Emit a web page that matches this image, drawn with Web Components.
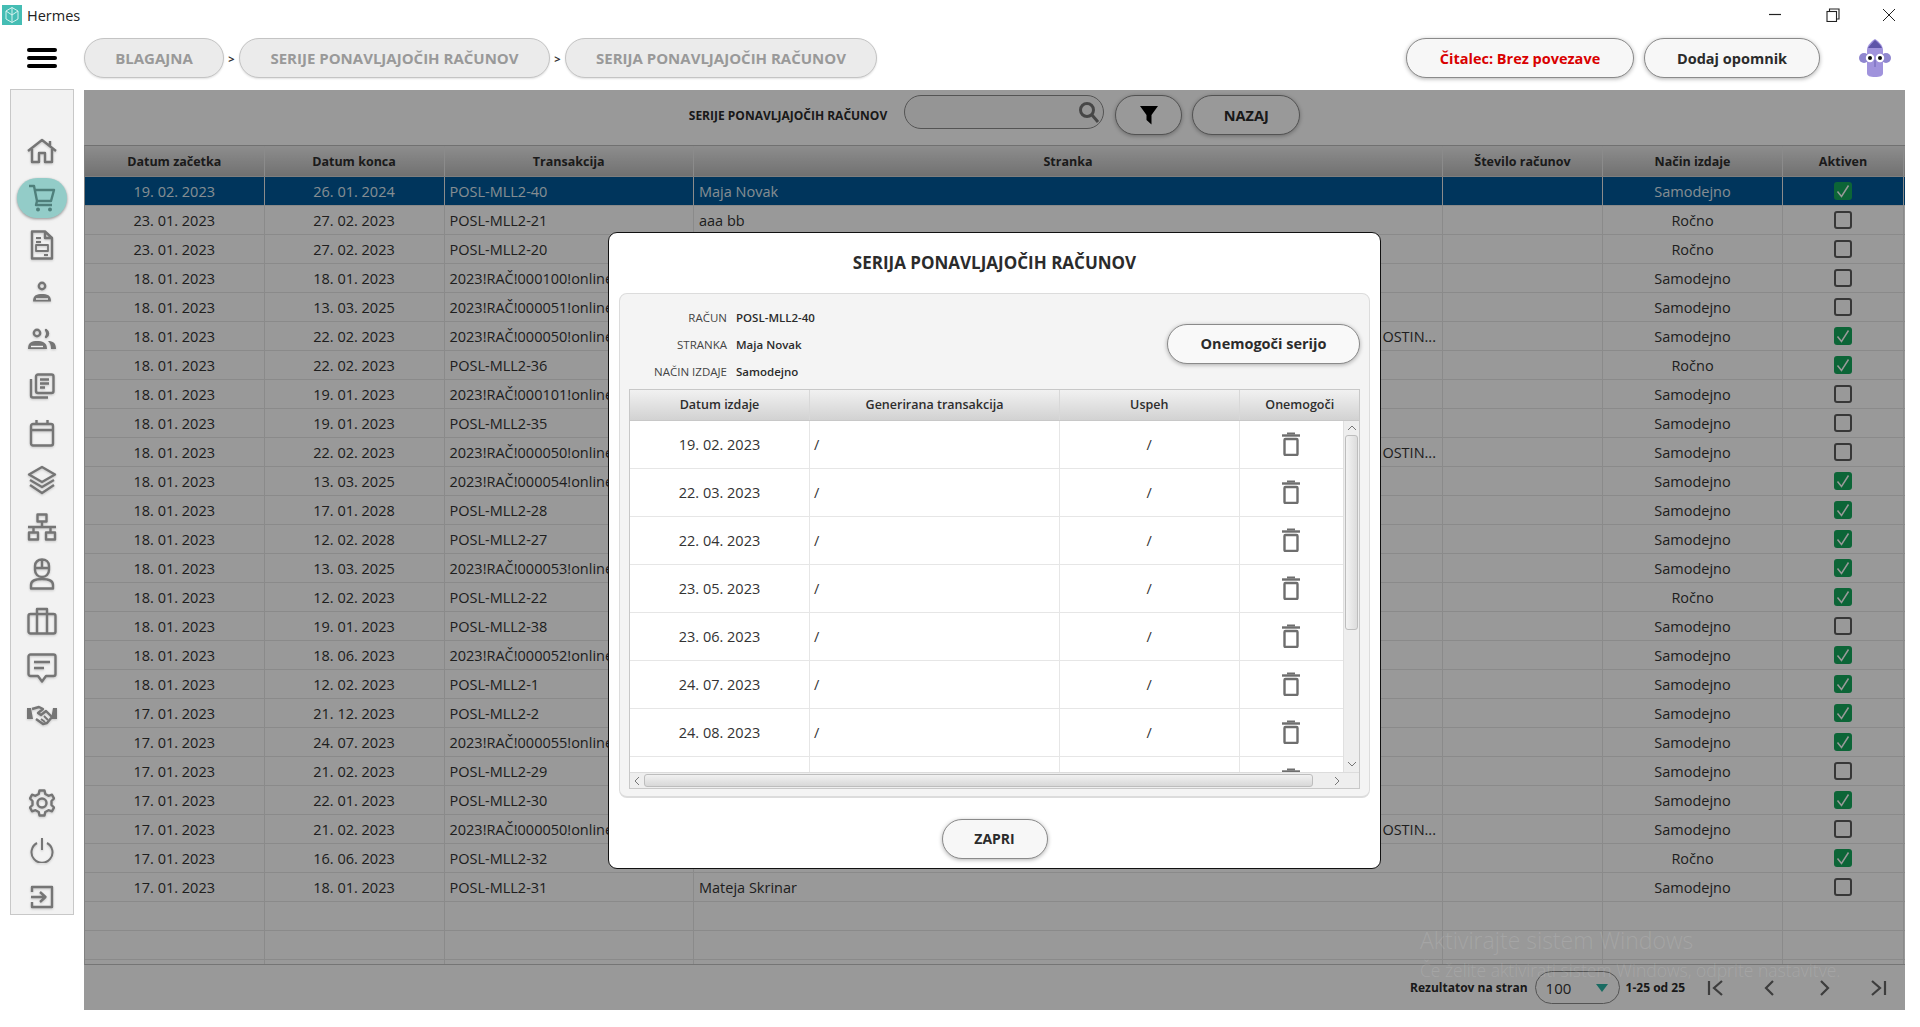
<!DOCTYPE html>
<html lang="sl"><head><meta charset="utf-8"><title>Hermes</title>
<style>
html,body{margin:0;padding:0;height:1027px;overflow:hidden;background:#fff;font-family:"Open Sans",sans-serif;color:#333}
</style></head><body>
<hermes-app></hermes-app>
<script>
const FONT='"Open Sans","Liberation Sans",sans-serif';
function def(name,html,setup){
  customElements.define(name,class extends HTMLElement{
    constructor(){super();const r=this.attachShadow({mode:'open'});r.innerHTML=typeof html==='function'?html(this):html;if(setup)setup(r,this);}
  });
}
const S=(w,h,vb,body,extra='')=>`<svg width="${w}" height="${h}" viewBox="${vb}" fill="none" stroke="currentColor" stroke-width="2.4" stroke-linejoin="round" ${extra}>${body}</svg>`;

def('title-bar',`<style>
:host{display:flex;align-items:center;height:30px;font:14.5px "Open Sans",sans-serif;color:#222}
.logo{width:20px;height:20px;margin:0 5px 0 2px;display:block}
.t{flex:1}
.w{display:flex;color:#222}
.w span{width:58px;height:30px;display:flex;align-items:center;justify-content:center}
</style>
<svg class="logo" viewBox="0 0 20 20"><rect width="20" height="20" fill="#45bdb4"/><path d="M10 2.5L16 6V14L10 17.5L4 14V6ZM10 2.5V17.5M4 6L10 10L16 6" fill="none" stroke="#d6f2ef" stroke-width="1"/></svg>
<span class="t">Hermes</span>
<div class="w">
<span style="margin-right:0"><svg width="14" height="14" viewBox="0 0 14 14"><path d="M1 6.5H13" stroke="#222" stroke-width="1.2"/></svg></span>
<span><svg width="14" height="14" viewBox="0 0 14 14" fill="none" stroke="#222" stroke-width="1.1"><rect x="1" y="3.5" width="9.5" height="10"/><path d="M3.5 3.5V1H13V11H10.5"/></svg></span>
<span style="width:54px;margin-right:4px"><svg width="14" height="14" viewBox="0 0 14 14"><path d="M1 1L13 13M13 1L1 13" stroke="#222" stroke-width="1"/></svg></span>
</div>`);

def('pill-button',`<style>
:host{display:inline-flex;box-sizing:border-box;align-items:center;justify-content:center;height:40px;border-radius:20px;border:1.5px solid #8a8a8a;background:#f7f7f7;font:700 14.5px "Open Sans",sans-serif;color:#2b2b2b;box-shadow:0 1px 4px rgba(0,0,0,.3);white-space:nowrap}
:host([crumb]){background:#ebebeb;border-color:#c4c4c4;color:#999;font-size:15px;box-shadow:0 1px 2px rgba(0,0,0,.12)}
:host([danger]){color:#d90000}
</style><slot></slot>`);

const crumbSep=`<span style="width:15px;text-align:center;font:700 11px 'Open Sans',sans-serif;color:#333">&gt;</span>`;
def('top-bar',`<style>
:host{display:flex;align-items:flex-start;height:60px;box-sizing:border-box;padding-top:8px}
.burger{width:84px;height:40px;display:flex;align-items:center;padding-left:27px;box-sizing:border-box}
.crumbs{display:flex;align-items:center}
.right{margin-left:auto;display:flex;align-items:center;gap:10px}
.masc{margin:0 29px 0 29px;display:block}
</style>
<div class="burger"><svg width="30" height="20" viewBox="0 0 30 20"><g fill="#000"><rect y="0" width="30" height="4" rx="2"/><rect y="8" width="30" height="4" rx="2"/><rect y="16" width="30" height="4" rx="2"/></g></svg></div>
<div class="crumbs">
<pill-button crumb style="width:140px">BLAGAJNA</pill-button>${crumbSep}
<pill-button crumb style="width:311px">SERIJE PONAVLJAJOČIH RAČUNOV</pill-button>${crumbSep}
<pill-button crumb style="width:312px">SERIJA PONAVLJAJOČIH RAČUNOV</pill-button>
</div>
<div class="right">
<pill-button danger style="width:228px">Čitalec: Brez povezave</pill-button>
<pill-button style="width:176px">Dodaj opomnik</pill-button>
<svg class="masc" width="32" height="38" viewBox="0 0 32 38"><ellipse cx="5" cy="19" rx="5" ry="5" fill="#8f86cf"/><ellipse cx="27" cy="19" rx="5" ry="5" fill="#8f86cf"/><path d="M8 11C8 6 13 2 16 0C19 2 24 6 24 11V34C24 37 21 38 16 38C11 38 8 37 8 34Z" fill="#a093dc"/><path d="M9 9C12 5 14 3 16 1C18 3 21 5 23 9Z" fill="#5e54a8"/><circle cx="11" cy="19" r="4.2" fill="#fff"/><circle cx="21" cy="19" r="4.2" fill="#fff"/><circle cx="11" cy="19" r="2" fill="#111"/><circle cx="21" cy="19" r="2" fill="#111"/><path d="M16 21V28" stroke="#6d63b3" stroke-width="1"/></svg>
</div>`);

const icons={
home:S(32,26,'0 0 32 26','<path d="M2 13L16 2L30 13M24 8V3M6 11V24H13V15H19V24H26V11"/>'),
cart:S(30,30,'0 0 30 30','<path d="M2 3H7L10 18H24L27 7H8M10 18L9 22H25"/><circle cx="11" cy="26.5" r="2" fill="currentColor" stroke="none"/><circle cx="23" cy="26.5" r="2" fill="currentColor" stroke="none"/>','style="color:#4f7f7b"'),
doc:S(24,30,'0 0 24 30','<path d="M2 1.5H15L22 8V28.5H2ZM15 1.5V8H22"/><path d="M6 8H11M6 12H11M14 25H18" stroke-width="1.8"/><rect x="6" y="15" width="12" height="6" stroke-width="1.8"/>'),
person:S(20,22,'0 0 20 22','<circle cx="10" cy="5" r="3.2"/><path d="M1 20.5C1 14 5 13 10 13S19 14 19 20.5Z" fill="currentColor" stroke="none"/><path d="M4 18H16" stroke="#f2f2f2" stroke-width="1.4"/>'),
people:S(30,22,'0 0 30 22','<circle cx="10" cy="5" r="3.2"/><path d="M19 2A4 4 0 0 1 19 9A6 6 0 0 0 19 2Z" fill="currentColor"/><path d="M1 21C1 14 5 13 10 13S20 14 20 21Z" fill="currentColor" stroke="none"/><path d="M4 18.5H16" stroke="#f2f2f2" stroke-width="1.4"/><path d="M21 13C26 13 29 15 29 21H24C24 17 23 15 21 13Z" fill="currentColor" stroke="none"/>'),
copies:S(26,26,'0 0 26 26','<rect x="7" y="1.5" width="17.5" height="18.5" rx="2"/><path d="M2 6V22.5A2 2 0 0 0 4 24.5H19M11 6.5H20M11 10.5H20M11 14.5H16" /> '),
calendar:S(26,28,'0 0 26 28','<rect x="2" y="5" width="22" height="21.5" rx="2"/><path d="M2 11H24M7.5 1V5M18.5 1V5"/>'),
layers:S(30,30,'0 0 30 30','<path d="M15 2L28 9.5L15 17L2 9.5Z"/><path d="M3 15L15 22L27 15" /><path d="M3 20L15 28L27 20"/>'),
network:S(30,28,'0 0 30 28','<rect x="10.5" y="1.5" width="9" height="7"/><rect x="2" y="19.5" width="9" height="7"/><rect x="19" y="19.5" width="9" height="7"/><path d="M15 8.5V14M1 14H29M6.5 14V19.5M23.5 14V19.5"/>'),
worker:S(26,32,'0 0 26 32','<path d="M6 12V8C6 4 9 1.5 13 1.5S20 4 20 8V12C20 16 17 19 13 19S6 16 6 12ZM6 10H20M13 1.5V10"/><path d="M2 30.5V27C2 23 6 21 13 21S24 23 24 27V30.5Z"/>'),
briefcase:S(30,28,'0 0 30 28','<rect x="1.5" y="7" width="27" height="19.5" rx="2"/><path d="M10 7V2H20V7M10 7V26.5M20 7V26.5"/>'),
chat:S(30,30,'0 0 30 30','<path d="M3.5 1.5H26.5A2 2 0 0 1 28.5 3.5V21A2 2 0 0 1 26.5 23H19L15 28.5L11 23H3.5A2 2 0 0 1 1.5 21V3.5A2 2 0 0 1 3.5 1.5Z"/><path d="M7 9H23M7 15H17"/>'),
handshake:S(32,22,'0 0 32 22','<path d="M1 4H5L7 15H1ZM31 4H27L25 15H31Z" fill="currentColor" stroke="none"/><path d="M6 5L13 3L17 5L12 9L15 11L20 7L26 13L21 19L17 20L10 15"/><path d="M15 15L19 18M18 12L22 16" stroke-width="1.8"/>'),
gear:S(26,28,'0 0 26 28','<path d="M10.5 1.5H15.5L16.3 5L19.5 6.8L23 5.7L25 9.5L22.5 12V16L25 18.5L23 22.3L19.5 21.2L16.3 23L15.5 26.5H10.5L9.7 23L6.5 21.2L3 22.3L1 18.5L3.5 16V12L1 9.5L3 5.7L6.5 6.8L9.7 5Z"/><circle cx="13" cy="14" r="4.5"/>'),
power:S(24,26,'0 0 24 26','<path d="M7 6A10.5 10.5 0 1 0 17 6M12 1V13" stroke-width="2"/>'),
exit:S(24,24,'0 0 24 24','<path d="M2 7V2H22V22H2V17M1 12H15M10 7L15.5 12L10 17"/>')
};
def('side-nav',`<style>
:host{display:block;width:64px;height:826px;box-sizing:border-box;background:#f2f2f2;border:1px solid #c8c8c8;padding-top:37px;color:#757575;flex:none}
.i{height:47px;display:flex;align-items:center;justify-content:center;filter:drop-shadow(0 1px 1px rgba(0,0,0,.18))}
.act{width:50px;height:40px;border-radius:20px;background:#93ccc8;display:flex;align-items:center;justify-content:center;box-shadow:0 1px 3px rgba(0,0,0,.25)}
.sp{height:41px}
svg{display:block}
</style>`+['home','*cart','doc','person','people','copies','calendar','layers','network','worker','briefcase','chat','handshake','|','gear','power','exit'].map(k=>k==='|'?'<div class="sp"></div>':k[0]==='*'?`<div class="i"><div class="act">${icons[k.slice(1)]}</div></div>`:`<div class="i">${icons[k]}</div>`).join(''));

def('check-box',`<style>
:host{display:block;width:18px;height:18px;box-sizing:border-box;border:2px solid #5c5c5c;border-radius:3px;background:transparent}
:host([on]){border:none;background:#15a85d}
svg{display:block}
</style><svg width="18" height="18" viewBox="0 0 18 18" fill="none"></svg>`,(r,h)=>{if(h.hasAttribute('on'))r.querySelector('svg').innerHTML='<path d="M3.5 9.5L7.5 14.5L14.5 3.5" stroke="#fff" stroke-width="1.5"/>';});

const D=[
['19. 02. 2023','26. 01. 2024','POSL-MLL2-40','Maja Novak','S',1],
['23. 01. 2023','27. 02. 2023','POSL-MLL2-21','aaa bb','R',0],
['23. 01. 2023','27. 02. 2023','POSL-MLL2-20','','R',0],
['18. 01. 2023','18. 01. 2023','2023!RAČ!000100!online','','S',0],
['18. 01. 2023','13. 03. 2025','2023!RAČ!000051!online','','S',0],
['18. 01. 2023','22. 02. 2023','2023!RAČ!000050!online','#','S',1],
['18. 01. 2023','22. 02. 2023','POSL-MLL2-36','','R',1],
['18. 01. 2023','19. 01. 2023','2023!RAČ!000101!online','','S',0],
['18. 01. 2023','19. 01. 2023','POSL-MLL2-35','','S',0],
['18. 01. 2023','22. 02. 2023','2023!RAČ!000050!online','#','S',0],
['18. 01. 2023','13. 03. 2025','2023!RAČ!000054!online','','S',1],
['18. 01. 2023','17. 01. 2028','POSL-MLL2-28','','S',1],
['18. 01. 2023','12. 02. 2028','POSL-MLL2-27','','S',1],
['18. 01. 2023','13. 03. 2025','2023!RAČ!000053!online','','S',1],
['18. 01. 2023','12. 02. 2023','POSL-MLL2-22','','R',1],
['18. 01. 2023','19. 01. 2023','POSL-MLL2-38','','S',0],
['18. 01. 2023','18. 06. 2023','2023!RAČ!000052!online','','S',1],
['18. 01. 2023','12. 02. 2023','POSL-MLL2-1','','S',1],
['17. 01. 2023','21. 12. 2023','POSL-MLL2-2','','S',1],
['17. 01. 2023','24. 07. 2023','2023!RAČ!000055!online','','S',1],
['17. 01. 2023','21. 02. 2023','POSL-MLL2-29','','S',0],
['17. 01. 2023','22. 01. 2023','POSL-MLL2-30','','S',1],
['17. 01. 2023','21. 02. 2023','2023!RAČ!000050!online','#','S',0],
['17. 01. 2023','16. 06. 2023','POSL-MLL2-32','','R',1],
['17. 01. 2023','18. 01. 2023','POSL-MLL2-31','Mateja Skrinar','S',0]
];
const emptyRow=`<div class="r"><div></div><div></div><div></div><div></div><div></div><div></div><div></div></div>`;
def('series-table',`<style>
:host{display:block;flex:1;min-height:0;overflow:hidden;border-top:1px solid #bdbdbd;border-bottom:1px solid #c4c4c4;border-left:1px solid #d8d8d8;box-sizing:border-box;font:14.5px "Open Sans",sans-serif;color:#333;background:#fff}
.r,.h{display:grid;grid-template-columns:179.5px 180px 249.5px 749px 160px 180px 121px}
.h{height:30px;background:linear-gradient(#ececec,#bcbcbc);font-weight:700;font-size:12.5px;color:#2d2d2d;border-bottom:1px solid #d2d2d2;box-sizing:content-box}
.h div{display:flex;align-items:center;justify-content:center;border-right:1px solid #e8e8e8}
.r{height:29px;box-sizing:border-box;border-bottom:1px solid #e6e6e6}
.r div{border-right:1px solid #e6e6e6;display:flex;align-items:center;white-space:nowrap;overflow:hidden;min-width:0}
.c{justify-content:center}.l{padding-left:5px}
.e{justify-content:flex-end;padding-right:6px}
.sel{background:#00599a;color:#dfe9f2}
.sel div{border-right-color:#e8e8e8}
</style>
<div class="h"><div>Datum začetka</div><div>Datum konca</div><div>Transakcija</div><div>Stranka</div><div>Število računov</div><div>Način izdaje</div><div>Aktiven</div></div>`+
D.map((d,i)=>`<div class="r ${i===0?'sel':''}"><div class="c">${d[0]}</div><div class="c">${d[1]}</div><div class="l">${d[2]}</div>${d[3]==='#'?'<div class="e">OSTIN...</div>':`<div class="l">${d[3]}</div>`}<div></div><div class="c">${d[4]==='S'?'Samodejno':'Ročno'}</div><div class="c"><check-box ${d[5]?'on':''}></check-box></div></div>`).join('')+emptyRow+emptyRow+emptyRow);

def('list-toolbar',`<style>
:host{display:flex;align-items:flex-start;justify-content:center;height:55px;box-sizing:border-box;padding-top:5px;font:700 12px "Open Sans",sans-serif;color:#2b2b2b}
.lab{height:40px;display:flex;align-items:center;margin-top:0;margin-right:17px;padding-bottom:0}
.s{width:200px;height:34px;box-sizing:border-box;border:1.5px solid #8c8c8c;border-radius:17px;background:#f9f9f9;display:flex;align-items:center;justify-content:flex-end;padding-right:3px;margin-right:11px}
pill-button{background:#fff}
</style>
<span class="lab">SERIJE PONAVLJAJOČIH RAČUNOV</span>
<div class="s"><svg width="22" height="24" viewBox="0 0 22 24" fill="none" stroke="#777" stroke-width="3"><circle cx="9" cy="10" r="6.5"/><path d="M14 15L20 22"/></svg></div>
<pill-button style="width:67px;margin-right:10px"><svg width="20" height="20" viewBox="0 0 20 20"><path d="M1 1H19L12.5 10V19.5L7.5 15V10Z" fill="#000"/></svg></pill-button>
<pill-button style="width:108px">NAZAJ</pill-button>`);

const pageBtn=(d)=>`<span class="n"><svg width="20" height="20" viewBox="0 0 20 20" fill="none" stroke="#666" stroke-width="2.2">${d}</svg></span>`;
def('list-footer',`<style>
:host{display:flex;align-items:center;justify-content:flex-end;height:45px;flex:none;font:700 12px "Open Sans",sans-serif;color:#2b2b2b}
.sel{width:85px;height:33px;box-sizing:border-box;border:1.5px solid #8c8c8c;border-radius:16.5px;background:#fff;margin:0 6px 0 7px;display:flex;align-items:center;justify-content:space-between;padding:0 11px 0 10px;font:400 15px "Open Sans",sans-serif;color:#333}
.n{width:54px;display:flex;justify-content:center}
.info{margin-right:4px}
</style>
<span>Rezultatov na stran</span>
<div class="sel"><span>100</span><svg width="12" height="8" viewBox="0 0 12 8"><path d="M0 0H12L6 8Z" fill="#2bb3a3"/></svg></div>
<span class="info">1-25 od 25</span>
${pageBtn('<path d="M3 3V17M16 3L8 10L16 17"/>')}${pageBtn('<path d="M13 3L6 10L13 17"/>')}${pageBtn('<path d="M7 3L14 10L7 17"/>')}${pageBtn('<path d="M4 3L12 10L4 17M17 3V17"/>')}`);

const trash=`<svg width="20" height="24" viewBox="0 0 20 24" fill="none" stroke="#6e6e6e"><path d="M1 3.5H19" stroke-width="2.4"/><path d="M6 1.5H14" stroke-width="2"/><rect x="3.5" y="7" width="13" height="16" rx="1" stroke-width="2.4"/></svg>`;
const D2=['19. 02. 2023','22. 03. 2023','22. 04. 2023','23. 05. 2023','23. 06. 2023','24. 07. 2023','24. 08. 2023',''];
def('issue-table',`<style>
:host{display:block;height:400px;box-sizing:border-box;border:1px solid #c8c8c8;background:#fff;position:relative;overflow:hidden;font:14.5px "Open Sans",sans-serif;color:#333;margin:0 9px}
.h{display:grid;grid-template-columns:180px 250px 179.5px 121.5px;height:30px;background:linear-gradient(#f1f1f1,#d2d2d2);border-bottom:1px solid #c8c8c8;font-weight:600;font-size:12.5px;color:#2d2d2d}
.h div{display:flex;align-items:center;justify-content:center;border-right:1px solid #d8d8d8}
.body{display:flex;height:351px}
.rows{width:713px;overflow:hidden}
.r{display:grid;grid-template-columns:180px 250px 179.5px 103.5px;height:48px;box-sizing:border-box;border-bottom:1px solid #e6e6e6}
.r div{display:flex;align-items:center;border-right:1px solid #e6e6e6}
.r div:last-child{border-right:0;justify-content:center;padding-bottom:0}
.c{justify-content:center}.l{padding-left:4px}
.vs{flex:1;background:#eeeeee;border-left:1px solid #e0e0e0;position:relative;display:flex;flex-direction:column;align-items:center}
.vt{width:13px;height:195px;margin-top:0;background:linear-gradient(90deg,#f3f3f3,#dcdcdc);border:1px solid #bdbdbd;border-radius:3px;box-sizing:border-box}
.ar{height:14px;display:flex;align-items:center;justify-content:center}
.hs{height:17px;background:#eeeeee;border-top:1px solid #dcdcdc;display:flex;align-items:center;box-sizing:border-box}
.ht{width:669px;height:13px;box-sizing:border-box;background:linear-gradient(#f1f1f1,#d8d8d8);border:1px solid #bdbdbd;border-radius:3px}
.ha{width:14px;display:flex;justify-content:center}
</style>
<div class="h"><div>Datum izdaje</div><div>Generirana transakcija</div><div>Uspeh</div><div>Onemogoči</div></div>
<div class="body"><div class="rows">`+D2.map((d,i)=>`<div class="r"><div class="c">${d}</div><div class="l">${d?'/':''}</div><div class="c">${d?'/':''}</div><div>${trash}</div></div>`).join('')+`</div>
<div class="vs"><span class="ar"><svg width="10" height="6" viewBox="0 0 10 6" fill="none" stroke="#777"><path d="M1 5L5 1L9 5"/></svg></span><div class="vt"></div><span class="ar" style="margin-top:auto;margin-bottom:1px"><svg width="10" height="6" viewBox="0 0 10 6" fill="none" stroke="#777"><path d="M1 1L5 5L9 1"/></svg></span></div></div>
<div class="hs"><span class="ha"><svg width="6" height="10" viewBox="0 0 6 10" fill="none" stroke="#777"><path d="M5 1L1 5L5 9"/></svg></span><div class="ht"></div><span class="ha" style="margin-left:17px"><svg width="6" height="10" viewBox="0 0 6 10" fill="none" stroke="#777"><path d="M1 1L5 5L1 9"/></svg></span></div>`);

def('series-dialog',`<style>
:host{display:flex;flex-direction:column;width:773px;height:637px;box-sizing:border-box;background:#fff;border:1.5px solid #111;border-radius:9px;font-family:"Open Sans",sans-serif;color:#2b2b2b;align-items:stretch}
h2{margin:0;height:60px;display:flex;align-items:center;justify-content:center;font:700 17px "Open Sans",sans-serif;padding-top:0;color:#2b2b2b}
.p{margin:0 10px;height:505px;box-sizing:border-box;background:#f4f4f4;border:1px solid #dcdcdc;border-bottom-width:2px;border-radius:8px;display:flex;flex-direction:column}
.top{display:flex;height:95px;align-items:flex-start}
.m{display:grid;grid-template-columns:107px auto;column-gap:9px;grid-auto-rows:27px;align-items:center;padding-top:10px;font-size:11.5px}
.m b{font-weight:600;color:#2b2b2b}
.m span{text-align:right;color:#444}
.top pill-button{margin:30px 9px 0 auto;background:#f9f9f9}
.foot{flex:1;display:flex;align-items:flex-start;justify-content:center;padding-top:21px}
</style>
<h2>SERIJA PONAVLJAJOČIH RAČUNOV</h2>
<div class="p"><div class="top"><div class="m"><span>RAČUN</span><b>POSL-MLL2-40</b><span>STRANKA</span><b>Maja Novak</b><span>NAČIN IZDAJE</span><b>Samodejno</b></div><pill-button style="width:193px">Onemogoči serijo</pill-button></div><issue-table></issue-table></div>
<div class="foot"><pill-button style="width:106px;font-size:14px">ZAPRI</pill-button></div>`);

def('modal-scrim',`<style>
:host{position:absolute;inset:0;background:rgba(0,0,0,.4);display:flex;align-items:center;justify-content:center}
</style><slot></slot>`);

def('win-watermark',`<style>
:host{position:absolute;left:1336px;top:835px;color:rgba(255,255,255,.13);font:300 23px "Open Sans",sans-serif;white-space:nowrap;line-height:31px}
div{font-size:17.5px;line-height:29px}
</style>Aktivirajte sistem Windows<div>Če želite aktivirati sistem Windows, odprite nastavitve.</div>`);

def('main-panel',`<style>
:host{display:flex;flex-direction:column;width:1821px;height:920px;position:relative;background:#fff;flex:none;overflow:hidden}
</style>
<list-toolbar></list-toolbar><series-table></series-table><list-footer></list-footer>
<modal-scrim><series-dialog></series-dialog></modal-scrim>
<win-watermark></win-watermark>`);

def('hermes-app',`<style>
:host{display:block;width:1920px;height:1027px;overflow:hidden;font-family:"Open Sans",sans-serif}
.b{display:flex;gap:10px;padding-left:10px;align-items:flex-start}
</style>
<title-bar></title-bar><top-bar></top-bar>
<div class="b"><side-nav style="margin-top:-1px"></side-nav><main-panel></main-panel></div>`);
</script></body></html>
